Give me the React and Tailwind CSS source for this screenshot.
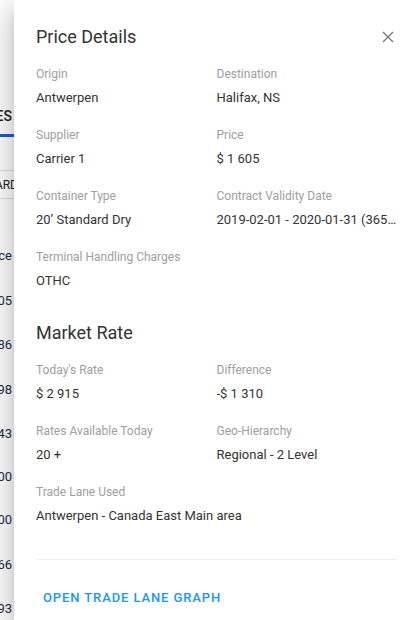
import React from "react";

const font = { fontFamily: "Roboto, 'Noto Sans', sans-serif" };

function Field({ label, value, wide = false }) {
  return (
    <div className={"flex flex-col min-w-0 " + (wide ? "col-span-2" : "")}>
      <div className="text-[12px] leading-[16px] text-[#9e9e9e]">{label}</div>
      <div className="mt-[6px] text-[13px] leading-[20px] text-[#333333] whitespace-nowrap overflow-hidden text-ellipsis">
        {value}
      </div>
    </div>
  );
}

function BgRow({ children, className = "" }) {
  return (
    <div className={"flex justify-end whitespace-nowrap " + className}>{children}</div>
  );
}

export default function App() {
  return (
    <div className="relative w-[419px] h-[620px] overflow-hidden bg-white" style={font}>
      {/* background page strip */}
      <div className="w-[14px] h-full overflow-hidden flex flex-col">
        <BgRow className="mt-[107px] h-[18px] text-[14px] leading-[18px] text-[#222] font-medium">
          <span className="pr-[2px]">RATES</span>
        </BgRow>
        <div className="mt-[9px] h-[3px] w-full bg-[#1e5bd8]" />
        <div className="mt-[33px] h-px w-full bg-[#e0e0e0]" />
        <BgRow className="mt-[5px] h-[18px] text-[12px] leading-[18px] text-[#222]">
          <span className="-mr-[4px]">STANDARD</span>
        </BgRow>
        <div className="mt-[4px] h-px w-full bg-[#e0e0e0]" />
        <div className="flex flex-col text-[13px] leading-[18px] text-[#1f2d4d]">
          <BgRow className="mt-[48px]"><span className="pr-[2px]">Price</span></BgRow>
          <BgRow className="mt-[27px]"><span className="pr-[2px]">1 605</span></BgRow>
          <BgRow className="mt-[26px]"><span className="pr-[2px]">2 886</span></BgRow>
          <BgRow className="mt-[27px]"><span className="pr-[2px]">1 998</span></BgRow>
          <BgRow className="mt-[26px]"><span className="pr-[2px]">2 243</span></BgRow>
          <BgRow className="mt-[25px]"><span className="pr-[2px]">1 900</span></BgRow>
          <BgRow className="mt-[25px]"><span className="pr-[2px]">2 100</span></BgRow>
          <BgRow className="mt-[27px]"><span className="pr-[2px]">1 766</span></BgRow>
          <BgRow className="mt-[26px]"><span className="pr-[2px]">2 093</span></BgRow>
        </div>
      </div>

      {/* drawer */}
      <div className="absolute top-0 left-[14px] w-[405px] h-full bg-white px-[22px] shadow-[0px_8px_10px_-5px_rgba(0,0,0,0.2),0px_16px_24px_2px_rgba(0,0,0,0.14),0px_6px_30px_5px_rgba(0,0,0,0.12)]">
        <div className="pt-[25px] flex items-center justify-between h-[49px]">
          <div className="text-[18px] leading-[24px] text-[#333333]">Price Details</div>
          <svg width="12" height="12" viewBox="0 0 12 12" className="mr-[3px]" stroke="#757575" strokeWidth="1.3" fill="none">
            <path d="M1 1 L11 11 M11 1 L1 11" />
          </svg>
        </div>

        <div className="mt-[17px] grid grid-cols-2 gap-y-[19px]">
          <Field label="Origin" value="Antwerpen" />
          <Field label="Destination" value="Halifax, NS" />
          <Field label="Supplier" value="Carrier 1" />
          <Field label="Price" value="$ 1 605" />
          <Field label="Container Type" value="20’ Standard Dry" />
          <Field label="Contract Validity Date" value="2019-02-01 - 2020-01-31 (365 days)" />
          <Field label="Terminal Handling Charges" value="OTHC" />
        </div>

        <div className="mt-[30px] text-[18px] leading-[24px] text-[#333333]">Market Rate</div>

        <div className="mt-[17px] grid grid-cols-2 gap-y-[19px]">
          <Field label="Today's Rate" value="$ 2 915" />
          <Field label="Difference" value="-$ 1 310" />
          <Field label="Rates Available Today" value="20 +" />
          <Field label="Geo-Hierarchy" value="Regional - 2 Level" />
          <Field label="Trade Lane Used" value="Antwerpen - Canada East Main area" wide />
        </div>

        <div className="mt-[33px] h-px bg-[#eeeeee]" />

        <div className="mt-[25px] pl-[7px]">
          <span className="text-[13px] leading-[16px] font-medium tracking-[0.9px] text-[#2196f3]">
            OPEN TRADE LANE GRAPH
          </span>
        </div>
      </div>
    </div>
  );
}
